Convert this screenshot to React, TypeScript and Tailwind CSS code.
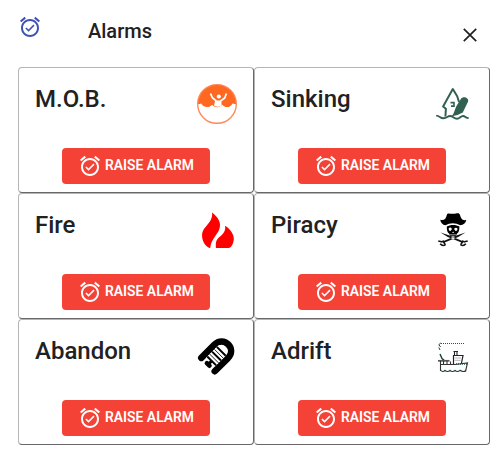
import type { ReactNode } from 'react';

function AlarmIcon({ className }: { className?: string }) {
  return (
    <svg viewBox="0 0 24 24" className={`h-6 w-6 shrink-0 ${className ?? ''}`} fill="currentColor">
      <path d="M22 5.72l-4.6-3.86-1.29 1.53 4.6 3.86L22 5.72zM7.88 3.39L6.6 1.86 2 5.71l1.29 1.53 4.59-3.85zM12 4c-4.97 0-9 4.03-9 9s4.02 9 9 9c4.97 0 9-4.03 9-9s-4.03-9-9-9zm0 16c-3.87 0-7-3.13-7-7s3.13-7 7-7 7 3.13 7 7-3.13 7-7 7zm-1.46-5.47L8.41 12.4l-1.06 1.06 3.18 3.18 6-6-1.06-1.06-4.93 4.95z" />
    </svg>
  );
}

function Art({ children }: { children: ReactNode }) {
  return (
    <svg viewBox="0 0 40 40" className="h-10 w-10 shrink-0" fill="none">
      {children}
    </svg>
  );
}

function OverboardArt() {
  return (
    <Art>
      <circle cx="20" cy="20" r="19.3" fill="#fff" stroke="#ff8a5a" strokeWidth="1.4" />
      <path
        d="M1 20A19 19 0 0 1 39 20C37 20 36 19.7 35.5 19.5C33 24.5 27.5 23.7 25.4 20.7C22.8 24 17.8 24 15 20.7C12 24.4 6.5 23.4 4.2 19.4C3.3 19.8 2 20 1 20Z"
        fill="#ff6820"
      />
      <circle cx="21.8" cy="12.5" r="2.1" fill="#fff" />
      <path d="M17 21.5L18.2 16.5H24.2L24.7 21.5Q21 24 17 21.5Z" fill="#fff" />
      <path d="M13.5 9.5L15.3 13.7L19.3 17M29.4 9.5L27.7 14L23.5 17" stroke="#fff" strokeWidth="1.7" strokeLinejoin="round" />
    </Art>
  );
}

function SinkingArt() {
  return (
    <Art>
      <path d="M12.4 32.5L12.9 24.7L10.1 22.4L19.8 5L24.2 12.3L26 18" stroke="#31614f" strokeWidth="2" strokeLinejoin="round" />
      <path d="M17.8 32.5C20 32 21 28 23.3 22.2L28 14.8C30.3 11.5 36 13.8 35.1 17.5L29.8 28.5L24.5 31Z" fill="#31614f" />
      <path d="M17.5 18.6H21V22.1H18" stroke="#31614f" strokeWidth="1.6" />
      <path d="M3.2 31.6C7 31.7 6.8 34.3 10.5 34.3C14 34.3 14.4 32 17 32C20 32 20.6 34.7 24 34.7C27 34.7 27.4 32 30 32C32.5 32 32.5 34 35.6 34" stroke="#31614f" strokeWidth="1.9" />
    </Art>
  );
}

function FireArt() {
  return (
    <Art>
      <path d="M15 2.5C21 7 25.4 13 21.8 20.5C19.7 25 14 30 13.2 38H12.5C7.5 35.8 4.7 30 5.1 24.5C5.6 16.5 16.5 12.5 15 2.5Z" fill="red" />
      <path d="M28.1 15.8C33.3 19 37.3 25 36.8 29.5C36.3 33.5 34.5 38 31.5 38H18.9C18.8 35 18.5 32.6 19.6 30.4C22 26 29.5 24 28.1 15.8Z" fill="red" />
    </Art>
  );
}

function PiracyArt() {
  return (
    <Art>
      <path d="M7.2 9.8C11.3 11 13 8.5 13.8 5C14.4 2.3 17 3.9 20.2 3.7C23.1 3.8 25.8 2 26.8 4.6C28 8 28.8 11 33.3 10.1C32.5 13.5 30.5 15 27.2 15.3C22.8 12.5 16.8 12.5 12.5 15.3C9.4 14.8 8 13 7.2 9.8Z" fill="#000" />
      <path d="M13.8 16.6C16.6 14.5 23.4 14.5 26.4 16.6C26.3 20.1 26.1 22.3 23.9 23.7L22.9 26.2H17.2L16.2 23.7C14.1 22.5 13.8 20 13.8 16.6Z" fill="#000" />
      <path d="M15.6 18.5Q17.4 16.5 19 19L17.5 21.1Q15.5 21 15.6 18.5ZM21 19Q23 16.5 24.6 18.7Q24.5 21 22.6 21.1ZM19.2 23L20.1 21.5L21 23Z" fill="#fff" />
      <path d="M17 24.8H23" stroke="#eee" strokeWidth=".7" />
      <path d="M7.5 22.5L15.8 25.2L30.5 31.5L29.7 32.9L14.8 27ZM32.5 22.5L24.2 25.2L9.5 31.5L10.3 32.9L25.2 27Z" fill="#111" />
      <path d="M7.2 33.8Q9.4 36.6 12.4 34.9M32.8 33.8Q30.6 36.6 27.6 34.9M9.7 30.5L12.4 34.9M30.3 30.5L27.6 34.9M5.3 31L9.5 32M34.7 31L30.5 32" stroke="#111" strokeWidth="1.6" />
    </Art>
  );
}

function AbandonArt() {
  return (
    <Art>
      <g transform="translate(22.7 16.9) rotate(45)">
        <path d="M-9.5 16.5V-1.8C-9.5 -15.5 9.5 -15.5 9.5 -1.8V16.5" stroke="#000" strokeWidth="6.6" strokeLinecap="round" />
        <path d="M-6.3 -2.6C-6.3 -10 6.3 -10 6.3 -2.6V13H-6.3Z" fill="#fff" />
        <path d="M-6.3 -2.2H6.3M-6.3 4.5H6.3M-6.3 11.3H6.3" stroke="#000" strokeWidth="2" />
        <path d="M-6.3 1.2H6.3M-6.3 7.9H6.3" stroke="#000" strokeWidth=".8" />
        <path d="M0 12V15" stroke="#000" strokeWidth="3" />
        <path d="M-1.8 16.3H1.8" stroke="#000" strokeWidth="4.6" strokeLinecap="round" />
      </g>
    </Art>
  );
}

function AdriftArt() {
  return (
    <Art>
      <path d="M8 7.5H31.5" stroke="#24544f" strokeWidth="1" strokeDasharray="1 1" />
      <path d="M7.8 7L5.8 8.7L7.6 11M5.8 11.5L7 14" stroke="#173f3b" strokeWidth="1" />
      <path d="M7 18L9 22.5L12 25" stroke="#173f3b" strokeWidth="1.4" />
      <path d="M5 24.8H16.5" stroke="#555" strokeWidth="1.7" />
      <path d="M7.5 25V35M10.5 25V28M14 25V28M17.5 25.5V28.5M7.7 28.5H22.2L34.5 27L32.5 35.5" stroke="#333" strokeWidth="1.1" />
      <path d="M20.5 28V19.5H30L28.4 27.5" stroke="#222" strokeWidth="1.2" />
      <path d="M21.7 22H28M21.7 24.3H27.5" stroke="#aaa" strokeWidth=".9" />
      <path d="M23 28H34.5" stroke="#24544f" strokeWidth="1.6" strokeDasharray="1 1" />
      <path d="M20.5 15.5H25M21.5 15.7V19.3M24 15.7V19.3" stroke="#222" strokeWidth="1.1" />
      <path d="M7.5 34Q9.7 36.7 12 34.3Q14.5 36.7 17 34.3Q19.5 36.7 22 34.3Q24.5 36.7 27 34.3Q30 36.7 33 34.5" stroke="#183d39" strokeWidth="1.1" />
    </Art>
  );
}

const alarms = [
  { name: 'M.O.B.', Picture: OverboardArt },
  { name: 'Sinking', Picture: SinkingArt },
  { name: 'Fire', Picture: FireArt },
  { name: 'Piracy', Picture: PiracyArt },
  { name: 'Abandon', Picture: AbandonArt },
  { name: 'Adrift', Picture: AdriftArt },
];

export default function App() {
  return (
    <main className="h-[450px] w-[499px] overflow-hidden bg-white font-[Roboto,sans-serif] text-[#212121]">
      <header className="flex h-[67px] items-start pl-[18px]">
        <AlarmIcon className="mt-[15px] text-[#3f51b5]" />
        <h1 className="mt-[15px] ml-[46px] text-[20px] leading-8 font-medium">Alarms</h1>
        <button aria-label="Close" className="mt-[23px] mr-[17px] ml-auto">
          <svg viewBox="0 0 24 24" className="h-6 w-6" fill="none" stroke="#212121" strokeWidth="1.7">
            <path d="M5.8 5.8L18.2 18.2M18.2 5.8L5.8 18.2" />
          </svg>
        </button>
      </header>
      <section className="ml-[18px] grid w-[472px] grid-cols-2">
        {alarms.map(({ name, Picture }) => (
          <article key={name} className="flex h-[126px] flex-col rounded-[4px] border border-t-[#b5b5b5] border-r-[#686868] border-b-[#686868] border-l-[#b5b5b5]">
            <div className="flex h-20 items-start justify-between pt-4 pr-4 pl-4">
              <h2 className="-mt-px text-[24px] leading-8 font-medium">{name}</h2>
              <Picture />
            </div>
            <button className="mx-auto flex h-9 w-[148px] items-center rounded-[4px] bg-[#f44336] pl-4 text-[13.9px] font-semibold whitespace-nowrap text-white">
              <AlarmIcon />
              <span className="-mt-px ml-[3px] pb-px">RAISE ALARM</span>
            </button>
          </article>
        ))}
      </section>
    </main>
  );
}
